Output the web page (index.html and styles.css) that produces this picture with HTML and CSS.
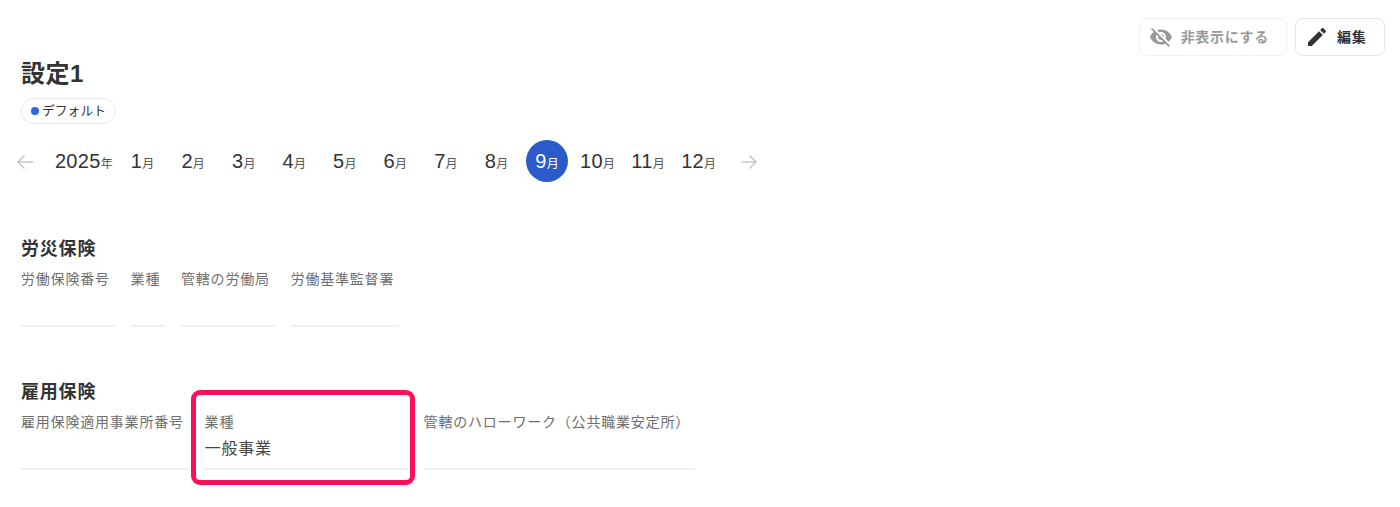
FILE: index.html
```html
<!DOCTYPE html>
<html lang="ja">
<head>
    <meta charset="UTF-8">
    <title>設定1</title>
    <link rel="stylesheet" href="styles.css">
</head>
<body>
    <div class="actions">
        <button class="btn btn-disabled">
            <svg viewBox="0 0 24 24" class="icon"><path d="M12 7c2.76 0 5 2.24 5 5 0 .65-.13 1.26-.36 1.83l2.92 2.92c1.51-1.26 2.7-2.89 3.43-4.75-1.73-4.39-6-7.5-11-7.5-1.4 0-2.74.25-3.98.7l2.16 2.16C10.74 7.13 11.35 7 12 7zM2 4.27l2.28 2.28.46.46C3.08 8.3 1.78 10.02 1 12c1.73 4.39 6 7.5 11 7.5 1.55 0 3.03-.3 4.38-.84l.42.42L19.73 22 21 20.73 3.27 3 2 4.27zM7.53 9.8l1.55 1.55c-.05.21-.08.43-.08.65 0 1.66 1.34 3 3 3 .22 0 .44-.03.65-.08l1.55 1.55c-.67.33-1.41.53-2.2.53-2.76 0-5-2.24-5-5 0-.79.2-1.53.53-2.2zm4.31-.78l3.15 3.15.02-.16c0-1.66-1.34-3-3-3l-.17.01z"/></svg>
            <span class="btn-text">非表示にする</span>
        </button>
        <button class="btn btn-edit">
            <svg viewBox="0 0 24 24" class="icon"><path d="M3 17.25V21h3.75L17.81 9.94l-3.75-3.75L3 17.25zM20.71 7.04c.39-.39.39-1.02 0-1.41l-2.34-2.34c-.39-.39-1.02-.39-1.41 0l-1.83 1.83 3.75 3.75 1.83-1.83z"/></svg>
            <span class="btn-text">編集</span>
        </button>
    </div>

    <h1 class="title">設定1</h1>
    <div class="chip"><span class="dot"></span><span class="chip-text">デフォルト</span></div>

    <div class="months">
        <span class="arrow"><svg viewBox="0 0 24 24"><path d="M20 12H5.500M11.500 5.500L5 12l6.500 6.500"/></svg></span>
        <span class="month year">2025<small>年</small></span>
        <span class="month">1<small>月</small></span>
        <span class="month">2<small>月</small></span>
        <span class="month">3<small>月</small></span>
        <span class="month">4<small>月</small></span>
        <span class="month">5<small>月</small></span>
        <span class="month">6<small>月</small></span>
        <span class="month">7<small>月</small></span>
        <span class="month">8<small>月</small></span>
        <span class="month active">9<small>月</small></span>
        <span class="month">10<small>月</small></span>
        <span class="month">11<small>月</small></span>
        <span class="month">12<small>月</small></span>
        <span class="arrow"><svg viewBox="0 0 24 24"><path d="M4.500 12h14M12.500 5.500L19 12l-6.500 6.500"/></svg></span>
    </div>

    <section class="section section-first">
        <h2>労災保険</h2>
        <div class="fields">
            <div class="field"><div class="label">労働保険番号</div><div class="value"></div></div>
            <div class="field"><div class="label">業種</div><div class="value"></div></div>
            <div class="field"><div class="label">管轄の労働局</div><div class="value"></div></div>
            <div class="field"><div class="label">労働基準監督署</div><div class="value"></div></div>
        </div>
    </section>

    <section class="section">
        <h2>雇用保険</h2>
        <div class="fields">
            <div class="field"><div class="label">雇用保険適用事業所番号</div><div class="value"></div></div>
            <div class="field field-wide"><div class="label">業種</div><div class="value">一般事業</div><div class="highlight"></div></div>
            <div class="field"><div class="label">管轄のハローワーク（公共職業安定所）</div><div class="value"></div></div>
        </div>
    </section>
</body>
</html>
```

FILE: styles.css
```css
* {
    box-sizing: border-box;
    margin: 0;
    padding: 0;
}

body {
    background: #fff;
    color: #333;
    font-family: "Liberation Sans", "Noto Sans CJK JP", sans-serif;
    letter-spacing: 0.05em;
    height: 507px;
    padding: 18px 15px 0 21px;
    overflow: hidden;
}

.actions {
    display: flex;
    justify-content: flex-end;
    gap: 8px;
}

.btn {
    display: flex;
    align-items: center;
    gap: 8px;
    height: 38px;
    padding: 0 17px 0 9px;
    background: #fff;
    border: 1px solid #e3e5e6;
    border-radius: 8px;
    color: #333;
    font: inherit;
    font-size: 14px;
    font-weight: 700;
    letter-spacing: 0.05em;
}

.btn-disabled {
    border-color: #f0f1f2;
    color: #999;
}

.btn-edit {
    width: 90px;
}

.btn-text {
    margin-bottom: 3px;
}

.icon {
    width: 24px;
    height: 24px;
    fill: currentColor;
}

.title {
    margin-top: 2px;
    font-size: 24px;
    line-height: 32px;
    font-weight: 700;
    letter-spacing: 0.02em;
}

.chip {
    display: inline-flex;
    align-items: center;
    gap: 3px;
    height: 26px;
    margin-top: 8px;
    padding: 0 9px;
    border: 1px solid #e8eaeb;
    border-radius: 13px;
    font-size: 12.800px;
    letter-spacing: 0;
    vertical-align: top;
}

.chip-text {
    margin-bottom: 3px;
}

.dot {
    width: 8px;
    height: 8px;
    border-radius: 50%;
    background: #2b66e6;
}

.months {
    display: flex;
    align-items: center;
    gap: 8.550px;
    height: 42px;
    margin: 16px 0 0 -17px;
    letter-spacing: 0.3px;
}

.arrow {
    display: flex;
    justify-content: center;
    width: 42px;
    margin-top: 2px;
}

.arrow svg {
    width: 24px;
    height: 24px;
    fill: none;
    stroke: #c4c6c8;
    stroke-width: 1.500;
}

.month {
    display: flex;
    align-items: baseline;
    justify-content: center;
    flex: none;
    width: 42px;
    height: 42px;
    line-height: 42px;
    font-size: 20px;
    white-space: nowrap;
}

.month small {
    color: #555;
    font-size: 12px;
    letter-spacing: 0;
}

.year {
    width: 58.500px;
}

.active {
    border-radius: 50%;
    background: #2b5bcb;
    color: #fff;
}

.active small {
    color: #fff;
}

.section {
    margin-top: 53px;
}

.section-first {
    margin-top: 55px;
}

.section h2 {
    font-size: 18px;
    line-height: 24px;
    font-weight: 700;
}

.fields {
    display: flex;
    gap: 16px;
    margin-top: 8px;
}

.field {
    position: relative;
    padding-right: 4.800px;
    border-bottom: 2px solid #eef1f2;
}

.field-wide {
    width: 203px;
}

.label {
    color: #6e6e6e;
    font-size: 14px;
    line-height: 20px;
    white-space: nowrap;
}

.value {
    height: 24px;
    margin: 5px 0 7px;
    color: #444;
    font-size: 16px;
    line-height: 24px;
    white-space: nowrap;
}

.highlight {
    position: absolute;
    top: -22px;
    left: -14px;
    width: 224px;
    height: 95px;
    border: 5px solid #ff0f5a;
    border-radius: 9px;
}
```
